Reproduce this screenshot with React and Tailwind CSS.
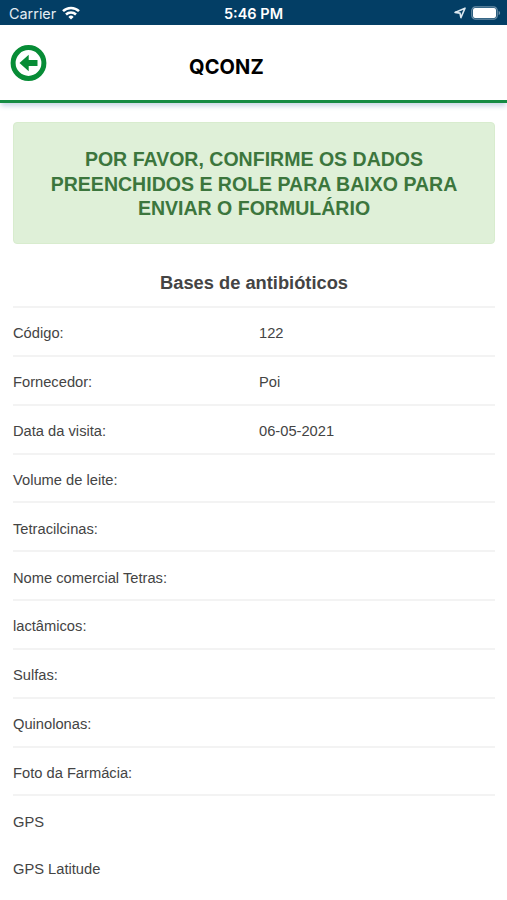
const rows = [
  ['Código:', '122'],
  ['Fornecedor:', 'Poi'],
  ['Data da visita:', '06-05-2021'],
  ['Volume de leite:', ''],
  ['Tetracilcinas:', ''],
  ['Nome comercial Tetras:', ''],
  ['lactâmicos:', ''],
  ['Sulfas:', ''],
  ['Quinolonas:', ''],
  ['Foto da Farmácia:', ''],
];

function StatusBar() {
  return (
    <div className="grid h-[25px] grid-cols-3 items-center bg-[#033e65] pt-[3px] font-['Inter','Roboto',sans-serif] text-[14px] leading-[20px] text-[#e4edf3]">
      <div className="flex items-center gap-[6px] pl-[9px]">
        <span className="text-[14.4px]">Carrier</span>
        <svg width="18" height="14" viewBox="0 0 18 14" fill="none" stroke="#fff" strokeWidth="2.5" className="-mt-[3px]">
          <path d="M1 5.2a11.3 11.3 0 0 1 16 0" />
          <path d="M4 8.5a7.1 7.1 0 0 1 10 0" />
          <path d="M9 13.5 6.4 10.9a3.7 3.7 0 0 1 5.2 0z" fill="#fff" stroke="none" />
        </svg>
      </div>
      <span className="text-center text-[14.5px] font-semibold text-white">5:46 PM</span>
      <div className="-mt-[2px] flex items-center justify-end gap-[5px] pr-[6px]">
        <svg width="12" height="12" viewBox="0 0 12 12" fill="none" stroke="#dce8f0" strokeWidth="1.6" strokeLinejoin="round">
          <path d="M11 1.2 6.9 10.6 6 6.1 1 5.4z" />
        </svg>
        <svg width="30" height="14" viewBox="0 0 30 14" fill="none">
          <rect x=".8" y=".8" width="25.4" height="12.4" rx="3.8" stroke="#6f91a9" strokeWidth="1.2" />
          <rect x="2" y="2" width="23" height="10" rx="2" fill="#fff" />
          <path d="M27.6 4.9c2 .7 2 3.5 0 4.2z" fill="#6f91a9" />
        </svg>
      </div>
    </div>
  );
}

function Header() {
  return (
    <header className="flex h-[78px] items-center border-b-[3px] border-[#168b43] bg-white pl-[10px] shadow-[0_4px_5px_-1px_#c9d5e5]">
      <svg width="37" height="37" viewBox="0 0 37 37" fill="none">
        <circle cx="18.5" cy="19" r="15.4" stroke="#078c36" strokeWidth="5" />
        <path d="M9.5 19 18.7 10.8v5.2h8.8v6h-8.8v5.2z" fill="#078c36" />
      </svg>
      <h1 className="ml-[142px] mt-[8px] font-['Inter',sans-serif] text-[20px] font-bold leading-[24px] tracking-[0.1px] text-black">QCONZ</h1>
    </header>
  );
}

export default function App() {
  return (
    <div className="h-[900px] w-[507px] overflow-hidden bg-white font-['Liberation_Sans',Arial,sans-serif] text-[#444]">
      <StatusBar />
      <Header />
      <main className="pl-[13px] pr-[12px] pt-[19px]">
        <div className="h-[122px] rounded-[4px] border border-[#d8ecce] bg-[#dff0d8] pt-[24px] text-center text-[19.55px] font-bold leading-[24.5px] text-[#3c763d]">
          <p>POR FAVOR, CONFIRME OS DADOS</p>
          <p>PREENCHIDOS E ROLE PARA BAIXO PARA</p>
          <p>ENVIAR O FORMULÁRIO</p>
        </div>
        <h2 className="flex h-[62px] items-center justify-center pt-[16px] text-[18.3px] font-bold">Bases de antibióticos</h2>
        <dl className="text-[14.7px]">
          {rows.map(([label, value]) => (
            <div key={label} className="grid h-[48.85px] grid-cols-[246px_1fr] items-center border-t-2 border-[#f3f3f3] pt-[3.8px]">
              <dt>{label}</dt>
              <dd>{value}</dd>
            </div>
          ))}
          <div className="flex h-[48.9px] items-center border-t-2 border-[#f3f3f3] pt-[5px]">GPS</div>
          <div className="flex h-[48.9px] items-center pt-[3px]">GPS Latitude</div>
        </dl>
      </main>
    </div>
  );
}
